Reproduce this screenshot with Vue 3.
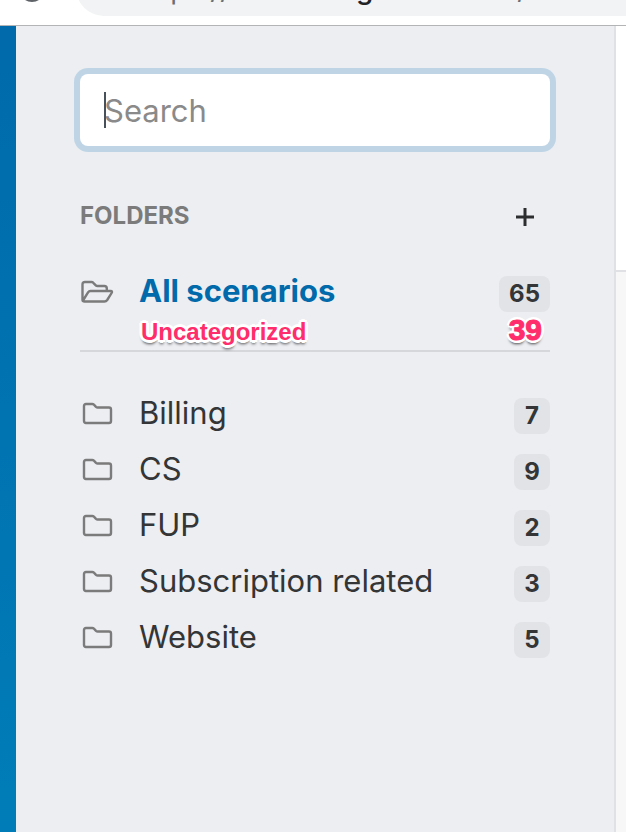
<script setup>
import { ref } from 'vue'

const query = ref('')
const folders = [
  { name: 'Billing', count: 7 },
  { name: 'CS', count: 9 },
  { name: 'FUP', count: 2 },
  { name: 'Subscription related', count: 3 },
  { name: 'Website', count: 5 },
]
</script>

<template>
  <div class="window">
    <header class="toolbar">
      <svg class="reload" viewBox="0 0 28 28" width="28" height="28" aria-hidden="true">
        <circle cx="14" cy="14" r="11" fill="none" stroke="#5f6368" stroke-width="4" />
      </svg>
      <div class="address">
        <span>https://</span><span class="domain">www.integromat.com</span><span>/</span>
      </div>
    </header>

    <div class="body">
      <div class="rail"></div>

      <aside class="sidebar">
        <div class="search">
          <input v-model="query" type="text" placeholder="Search" aria-label="Search" />
          <span class="caret"></span>
        </div>

        <div class="heading">
          <h2>FOLDERS</h2>
          <button type="button" class="add" aria-label="Add folder">
            <svg viewBox="0 0 18 18" width="18" height="18" aria-hidden="true">
              <path d="M9 0V18M0 9H18" fill="none" stroke="#2b2d2f" stroke-width="3" />
            </svg>
          </button>
        </div>

        <div class="all">
          <a href="#" class="row active">
            <svg class="icon" viewBox="0 0 34 24" width="34" height="24" aria-hidden="true">
              <path
                d="M2.5 20V4.5Q2.5 2 5 2H11.5Q12.6 2 13.3 2.8L15.8 5.4Q16.4 6 17.4 6H24.3Q26.8 6 26.8 8.5V11M3 20.5L8.2 12.2Q9 11 10.4 11H30.6Q32.8 11 31.6 13L27.2 20Q26.2 21.5 24.4 21.5H4.4Q2.5 21.5 2.5 20"
                fill="none" stroke="#7b7b7b" stroke-width="2.4" stroke-linejoin="round" />
            </svg>
            <span class="name">All scenarios</span>
            <span class="badge">65</span>
          </a>
          <div class="note">
            <span class="note-label">Uncategorized</span>
            <span class="note-count">39</span>
          </div>
        </div>

        <nav class="list">
          <a v-for="folder in folders" :key="folder.name" href="#" class="row">
            <svg class="icon" viewBox="0 0 34 24" width="34" height="24" aria-hidden="true">
              <path
                d="M6 2H12.2Q13.2 2 13.9 2.7L16 4.9Q16.7 5.5 17.7 5.5H29Q31 5.5 31 7.5V19Q31 21 29 21H6Q4 21 4 19V4Q4 2 6 2Z"
                fill="none" stroke="#7b7b7b" stroke-width="2.4" stroke-linejoin="round" />
            </svg>
            <span class="name">{{ folder.name }}</span>
            <span class="badge">{{ folder.count }}</span>
          </a>
        </nav>
      </aside>

      <main class="content">
        <div class="content-head"></div>
      </main>
    </div>
  </div>
</template>

<style>
body {
  background: #edeef2;
}
</style>

<style scoped>
.window {
  display: flex;
  flex-direction: column;
  min-height: 100vh;
  font-family: Inter, "Liberation Sans", sans-serif;
  color: #333536;
}

.window * {
  box-sizing: border-box;
}

.toolbar {
  display: flex;
  align-items: flex-end;
  gap: 30px;
  height: 26px;
  padding: 0 0 9px 18px;
  overflow: hidden;
  background: #fff;
  border-bottom: 1px solid #b3b4b5;
}

.reload {
  flex: none;
  margin-bottom: 13px;
}

.address {
  flex: 1;
  height: 56px;
  padding-left: 60px;
  border-radius: 28px 0 0 28px;
  background: #f1f3f4;
  color: #6b6f73;
  font-size: 28px;
  line-height: 58px;
  white-space: nowrap;
}

.domain {
  color: #202124;
  font-weight: 500;
}

.body {
  flex: 1;
  display: grid;
  grid-template-columns: 16px minmax(0, 1fr) 10px;
}

.rail {
  background: linear-gradient(#006aaa, #007db8);
}

.sidebar {
  padding: 48px 64px;
  background: #edeef2;
  border-right: 2px solid #e0e1e5;
}

.search {
  position: relative;
}

.search input {
  display: block;
  width: 100%;
  height: 72px;
  padding: 0 24px;
  border: 0;
  border-radius: 8px;
  outline: 0;
  background: #fff;
  box-shadow: 0 0 0 6px #bfd5e6;
  color: #333536;
  font: 31px Inter, "Liberation Sans", sans-serif;
}

.search input::placeholder {
  color: #8a8a8a;
  opacity: 1;
}

.caret {
  position: absolute;
  top: 18px;
  left: 24px;
  width: 2px;
  height: 36px;
  background: #48505c;
}

.heading {
  display: flex;
  align-items: center;
  justify-content: space-between;
  height: 48px;
  margin: 46px 0 24px;
}

.heading h2 {
  margin: 0;
  color: #7b7b7b;
  font-size: 24px;
  font-weight: 700;
  line-height: 48px;
}

.add {
  display: grid;
  place-items: center;
  width: 50px;
  height: 48px;
  padding: 2px 0 0;
  border: 0;
  background: none;
  cursor: pointer;
}

.all {
  margin-bottom: 34px;
  border-bottom: 2px solid #d5d7da;
}

.row {
  display: flex;
  align-items: center;
  height: 56px;
  color: inherit;
  font-size: 31px;
  text-decoration: none;
}

.icon {
  flex: none;
  margin-right: 25px;
}

.name {
  flex: 1;
  padding-bottom: 4px;
}

.active .name {
  color: #006aaa;
  font-weight: 700;
}

.badge {
  min-width: 36px;
  height: 36px;
  margin-top: 4px;
  padding: 0 10px;
  border-radius: 8px;
  background: #e2e3e6;
  font-size: 24px;
  font-weight: 700;
  line-height: 36px;
  text-align: center;
}

.note {
  display: flex;
  align-items: flex-start;
  justify-content: space-between;
  height: 30px;
  padding: 0 8px 0 61px;
  color: #ff2d6b;
  font-family: "Liberation Sans", sans-serif;
  font-weight: 700;
  line-height: 20px;
  text-shadow:
    0 3px 0 #fff,
    0 -3px 0 #fff,
    3px 0 0 #fff,
    -3px 0 0 #fff,
    2px 2px 0 #fff,
    -2px 2px 0 #fff,
    2px -2px 0 #fff,
    -2px -2px 0 #fff,
    0 4px 3px rgba(0, 0, 0, 0.7);
}

.note-label {
  font-size: 24px;
  line-height: 24px;
}

.note-count {
  font-size: 30px;
  -webkit-text-stroke: 1px #ff2d6b;
}

.content {
  background: #f7f7f7;
}

.content-head {
  height: 246px;
  background: #fff;
  border-bottom: 2px solid #e0e1e5;
}
</style>
